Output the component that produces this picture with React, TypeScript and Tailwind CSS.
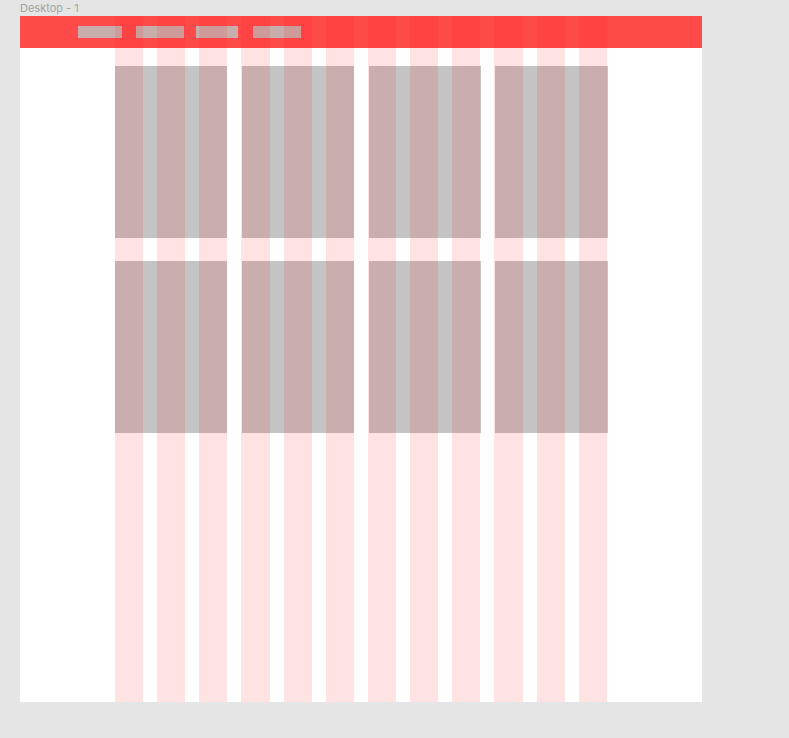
const navItems = [
  { cls: "w-[44px]" },
  { cls: "ml-[14px] w-[48px]" },
  { cls: "ml-[12px] w-[42px]" },
  { cls: "ml-[15px] w-[48px]" },
];

const cards = Array.from({ length: 8 }, (_, i) => i);
const columns = Array.from({ length: 12 }, (_, i) => i);

export default function App() {
  return (
    <div className="h-[738px] w-[789px] bg-[#e5e5e5] font-['Inter','Liberation_Sans',sans-serif]">
      <p className="pl-5 pt-[1px] text-[11px] leading-[14px] text-[#a3a3a3]">
        Desktop - 1
      </p>
      <div className="relative ml-5 mt-[1px] h-[686px] w-[682px] bg-white">
        {/* header */}
        <header className="flex h-8 items-center bg-[#ff4a4a] pl-[58px]">
          {navItems.map((n, i) => (
            <div key={i} className={`h-3 ${n.cls} bg-[#c8adad]`} />
          ))}
        </header>

        {/* cards */}
        <div className="grid w-fit grid-cols-[repeat(4,112px)] gap-x-[15px] gap-y-[23px] pl-[95px] pt-[18px] [&>*:nth-child(4n)]:-ml-px">
          {cards.map((c) => (
            <div key={c} className="h-[172px] bg-[#c4c4c4]" />
          ))}
        </div>

        {/* layout grid overlay */}
        <div className="pointer-events-none absolute inset-y-0 left-[95px] grid w-[492px] grid-cols-12 gap-x-[14px]">
          {columns.map((c) => (
            <div key={c} className="bg-[#ff0000]/[0.11]" />
          ))}
        </div>
      </div>
    </div>
  );
}
